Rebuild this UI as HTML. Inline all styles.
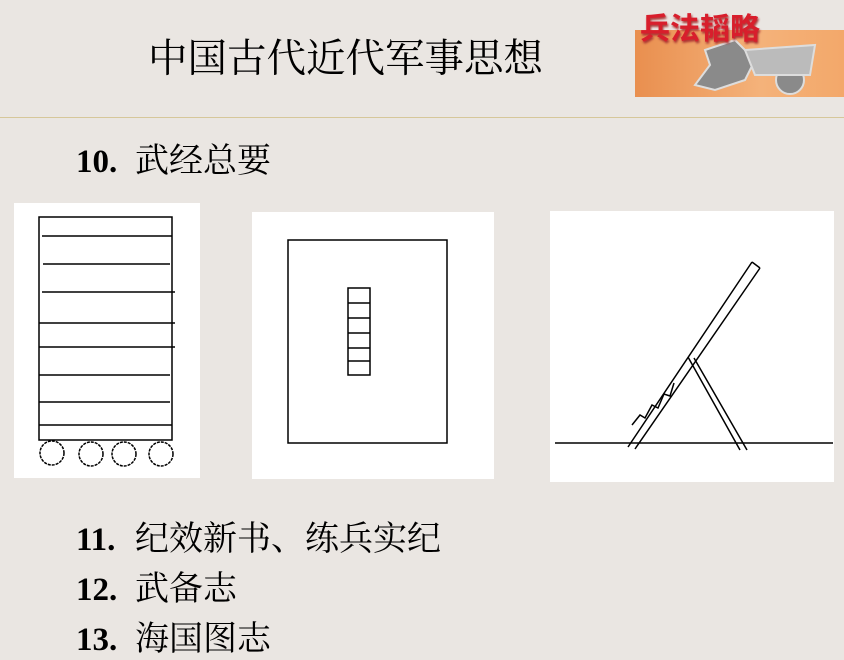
<html><head><style>
body{margin:0;width:844px;height:656px;background:#eae6e2;position:relative;overflow:hidden;font-family:"Liberation Serif","Noto Serif CJK SC",serif;}
.t{position:absolute;white-space:nowrap;color:#000;}
.n{font-weight:bold;display:inline-block;width:59px;font-size:33px;}
.c{font-size:34px;}
</style></head><body>
<div class="t" style="left:148px;top:28px;font-size:39.5px;">中国古代近代军事思想</div>
<div style="position:absolute;left:635px;top:30px;width:209px;height:67px;background:linear-gradient(90deg,#e98f4f,#f4b27a 60%,#f3a86a);"></div>
<svg style="position:absolute;left:635px;top:30px" width="209" height="67"><g fill="#8a8a8a" stroke="#ddd" stroke-width="2"><path d="M70 20 L100 10 L120 30 L110 50 L80 60 L60 55 L75 35Z"/><circle cx="155" cy="50" r="14"/><path d="M110 20 L180 15 L175 45 L120 45Z" fill="#bbb"/></g></svg>
<div class="t" style="left:640px;top:4px;font-size:30px;color:#d81e2c;font-weight:bold;font-family:'Noto Sans CJK SC',sans-serif;text-shadow:1px 2px 2px #a33;">兵法韬略</div>
<div style="position:absolute;left:0;top:117px;width:844px;height:1px;background:#d6c79a;"></div>
<div class="t" style="left:76px;top:133px;"><span class="n">10.</span><span class="c">武经总要</span></div>
<svg style="position:absolute;left:0;top:0" width="844" height="656">
<rect x="14" y="203" width="186" height="275" fill="#fff"/>
<rect x="252" y="212" width="242" height="267" fill="#fff"/>
<rect x="550" y="211" width="284" height="271" fill="#fff"/>
<g stroke="#000" stroke-width="1.5" fill="none">
<rect x="39" y="217" width="133" height="223"/>
<path d="M42 236H172M43 264H170M42 292H175M39 323H175M39 347H175M39 375H170M39 402H170M39 425H172"/>
<circle cx="52" cy="453" r="12" stroke-dasharray="3 1"/><circle cx="91" cy="454" r="12" stroke-dasharray="3 1"/><circle cx="124" cy="454" r="12" stroke-dasharray="3 1"/><circle cx="161" cy="454" r="12" stroke-dasharray="3 1"/>
<rect x="288" y="240" width="159" height="203"/>
<rect x="348" y="288" width="22" height="87"/>
<path d="M348 303H370M348 318H370M348 333H370M348 348H370M348 361H370"/>
<path d="M555 443H833"/>
<path d="M628 447L752 262M635 449L760 268M752 262L760 268"/>
<path d="M688 357L740 450M694 358L747 450"/>
<path d="M632 425L640 415L645 418L652 405L658 408L664 394L670 396L674 383"/>
</g></svg>
<div class="t" style="left:76px;top:511px;"><span class="n">11.</span><span class="c">纪效新书、练兵实纪</span></div>
<div class="t" style="left:76px;top:561px;"><span class="n">12.</span><span class="c">武备志</span></div>
<div class="t" style="left:76px;top:611px;"><span class="n">13.</span><span class="c">海国图志</span></div>
</body></html>
